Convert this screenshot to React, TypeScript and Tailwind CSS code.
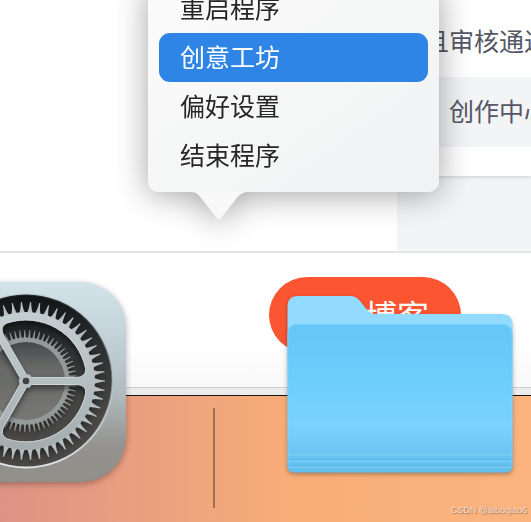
import { useState } from 'react'

const MENU_ITEMS = ['重启程序', '创意工坊', '偏好设置', '结束程序']

const OUTER_TEETH = Array.from({ length: 54 }, (_, i) => (i * 360) / 54)
const INNER_TEETH = Array.from({ length: 63 }, (_, i) => (i * 360) / 63)

function SettingsIcon({ className }: { className?: string }) {
  return (
    <svg className={className} viewBox="-100 -99 200 200" role="img" aria-label="系统设置">
      <defs>
        <linearGradient id="plate" x1="0" y1="0" x2="0" y2="1">
          <stop offset="0" stopColor="#d3e3ea" />
          <stop offset="0.25" stopColor="#c5d3da" />
          <stop offset="0.55" stopColor="#b1bcc0" />
          <stop offset="0.82" stopColor="#94938f" />
          <stop offset="1" stopColor="#918f8a" />
        </linearGradient>
        <linearGradient id="well" x1="0" y1="0" x2="0" y2="1">
          <stop offset="0" stopColor="#101415" />
          <stop offset="0.3" stopColor="#2c3030" />
          <stop offset="0.7" stopColor="#4b4a48" />
          <stop offset="1" stopColor="#4d4b49" />
        </linearGradient>
        <linearGradient id="rim" x1="0" y1="0" x2="0" y2="1">
          <stop offset="0" stopColor="#6f7a7e" stopOpacity="0.2" />
          <stop offset="0.5" stopColor="#c9d0d3" stopOpacity="0.5" />
          <stop offset="1" stopColor="#e1e6e8" />
        </linearGradient>
        <linearGradient id="wheel" gradientUnits="userSpaceOnUse" x1="0" y1="-80" x2="0" y2="80">
          <stop offset="0" stopColor="#c6cfd2" />
          <stop offset="0.5" stopColor="#b5bec1" />
          <stop offset="1" stopColor="#a2a9ab" />
        </linearGradient>
        <linearGradient id="innerDisc" x1="0" y1="0" x2="0" y2="1">
          <stop offset="0" stopColor="#444949" />
          <stop offset="0.3" stopColor="#666766" />
          <stop offset="1" stopColor="#777874" />
        </linearGradient>
        <path id="opening" d="M4 -6 Q2 -3.500 6 -3.500 L49 -3.500 Q60.500 -3.500 59.500 -12.700 A61 61 0 0 0 -18.800 -58 Q-27.500 -54.500 -21.500 -44.200 L0 -7 Q2 -3.500 4 -6 Z" />
        <mask id="spokes" maskUnits="userSpaceOnUse" x="-100" y="-100" width="200" height="200">
          <circle r="69" fill="white" />
          <use href="#opening" fill="black" />
          <use href="#opening" fill="black" transform="rotate(120)" />
          <use href="#opening" fill="black" transform="rotate(240)" />
          <circle r="6.500" fill="white" />
        </mask>
        <filter id="soft" x="-20%" y="-20%" width="140%" height="140%">
          <feDropShadow dx="0" dy="4" stdDeviation="3" floodColor="#000" floodOpacity="0.5" />
        </filter>
        <clipPath id="wellClip">
          <circle r="86" />
        </clipPath>
      </defs>

      <rect x="-100" y="-99" width="200" height="200" rx="45" fill="url(#plate)" />
      <circle r="86.500" fill="url(#well)" stroke="url(#rim)" strokeWidth="2" />

      <g clipPath="url(#wellClip)">
        {/* small gear behind the spokes */}
        <g filter="url(#soft)">
          {INNER_TEETH.map(angle => (
            <path key={angle} d="M41 -1.600 L45 -0.900 L51 -0.400 V0.400 L45 0.900 L41 1.600 Z" fill="#8d9392" transform={`rotate(${angle})`} />
          ))}
          <circle r="43.500" fill="#949a9a" />
          <circle r="39" fill="url(#innerDisc)" />
        </g>

        {/* large gear */}
        <g filter="url(#soft)">
          {OUTER_TEETH.map(angle => (
            <path key={angle} d="M67 -3.500 Q70 -1.300 79 -0.500 V0.500 Q70 1.300 67 3.500 Z" fill="url(#wheel)" transform={`rotate(${angle})`} />
          ))}
          <circle r="69" fill="url(#wheel)" mask="url(#spokes)" />
        </g>
        {[0, 120, 240].map(angle => (
          <use key={angle} href="#opening" fill="none" stroke="#d9e0e2" strokeWidth="0.800" transform={`rotate(${angle})`} />
        ))}
        <circle r="7" fill="#b5bec1" />
        <circle r="3.300" fill="#3f4343" />
      </g>
    </svg>
  )
}

function FolderIcon({ className }: { className?: string }) {
  return (
    <svg className={className} viewBox="0 0 226 177" role="img" aria-label="文件夹">
      <defs>
        <linearGradient id="folderFront" x1="0" y1="0" x2="0" y2="1">
          <stop offset="0" stopColor="#63c7f8" />
          <stop offset="0.35" stopColor="#6ccdfa" />
          <stop offset="0.68" stopColor="#7ad3fc" />
          <stop offset="0.86" stopColor="#6dc6f2" />
          <stop offset="1" stopColor="#61bdec" />
        </linearGradient>
      </defs>
      <path d="M0.500 11 Q0.500 0 11 0 H63 Q69 0 73 5 L81 15 Q84 18 89 18 H214 Q225.500 18 225.500 29 V80 H0.500 Z" fill="#92dbff" />
      <path d="M0.500 39 Q0.500 28 11 28 H214 Q225.500 28 225.500 39 V170 Q225.500 176.500 218 176.500 H7 Q0.500 176.500 0.500 170 Z" fill="url(#folderFront)" />
      <path d="M1 170 V39 Q1 29 11 28.500 H214 Q224 29 225 39 V170" fill="none" stroke="#8ad8fc" strokeOpacity="0.5" />
      <path d="M1 159 H225 M1 165 H225 M1 171 H225" stroke="#84d0f5" strokeOpacity="0.45" strokeWidth="2" />
      <path d="M1 163.500 H225 M1 169.500 H225" stroke="#54b0e0" strokeOpacity="0.7" />
    </svg>
  )
}

function DockMenu() {
  const [selected, setSelected] = useState('创意工坊')

  return (
    <div className="absolute -top-4 left-[148px] w-[291px] drop-shadow-[0_3px_16px_rgba(0,0,0,0.36)]">
      <div role="menu" className="rounded-b-[10px] bg-linear-to-br from-[#fbfbfb] to-[#f1f2f3] px-[11px] pb-3">
        {MENU_ITEMS.map(item => (
          <button
            key={item}
            type="button"
            role="menuitem"
            onMouseEnter={() => setSelected(item)}
            className={`flex h-[49px] w-full items-center rounded-[11px] px-[21px] pt-px text-[25px] leading-8 ${
              item === selected ? 'bg-[#2e85e6] text-white' : 'text-[#262626]'
            }`}
          >
            {item}
          </button>
        ))}
      </div>
      {/* pointer towards the dock */}
      <svg className="ml-[42px] block h-7 w-[58px]" viewBox="0 0 58 28">
        <path d="M0 0 C6 0 8 2 11 6 L26.500 25.500 Q29 28.500 31.500 25.500 L46 7 C50 2 53 0 58 0 Z" fill="#f9f9f9" />
      </svg>
    </div>
  )
}

function Dock() {
  return (
    <div className="absolute top-[282px] left-0 flex items-start">
      <SettingsIcon className="-ml-[74px] h-[200px] w-[200px] shrink-0 drop-shadow-[0_2px_3px_rgba(0,0,0,0.3)]" />
      <div className="mt-[126px] ml-[87px] h-[100px] w-0.5 shrink-0 bg-[#9d7052]" />
      <FolderIcon className="mt-3.5 ml-[72px] h-[177px] w-[226px] shrink-0 drop-shadow-[0_2px_2px_rgba(0,0,0,0.3)]" />
    </div>
  )
}

export default function App() {
  return (
    <div className="relative flex min-h-screen flex-col overflow-hidden bg-linear-to-r from-[#dc9385] via-[#f9ad77] via-55% to-[#fbb47e] font-['Inter','Noto_Sans_CJK_SC',sans-serif]">
      {/* Browser window */}
      <main className="border-b border-[#151515] bg-[#ececec] pb-[7px]">
        <div className="border-b border-[#cfcfcf] bg-white">
          <div className="flex border-b-2 border-[#e4e4e5] pl-[397px]">
            <div className="min-w-0 flex-1 bg-[#f3f4f6] pb-[75px]">
              <div className="overflow-hidden bg-white pt-[7px] pb-[29px] text-[25px] leading-[70px] whitespace-nowrap text-[#555666] shadow-[0_1px_4px_rgba(0,0,0,0.16)]">
                <p className="pl-[27px]">且审核通过</p>
                <a href="#creator" className="block bg-[#f3f4f6] pl-[52px]">创作中心</a>
              </div>
            </div>
          </div>
          <div className="bg-linear-to-b from-white from-70% to-[#f8f8f8] pt-6 pb-[34px] pl-[269px]">
            <button type="button" className="flex h-[76px] w-48 items-center justify-end rounded-full bg-[#fc5531] pt-1 pr-8 text-[32px] text-white">
              博客
            </button>
          </div>
        </div>
      </main>

      <Dock />
      <DockMenu />

      <p className="mt-auto pr-1 pb-1 text-right font-['Liberation_Sans',sans-serif] text-[9px] leading-4 text-[#f0dccf] [text-shadow:1px_1px_1px_rgba(110,70,50,0.6)]">
        CSDN @aiboqiao6
      </p>
    </div>
  )
}
